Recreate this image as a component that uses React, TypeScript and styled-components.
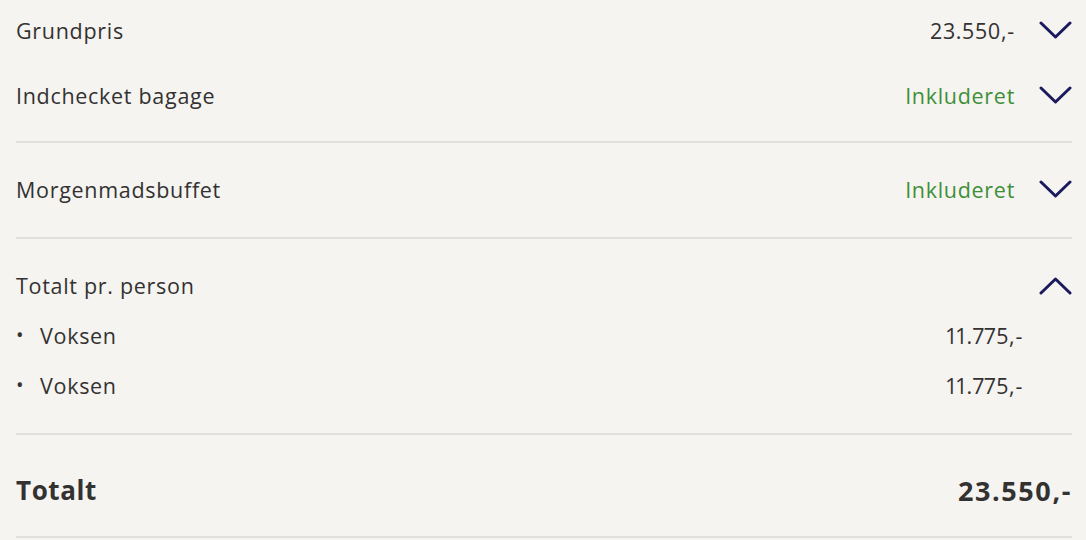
import styled, { createGlobalStyle } from "styled-components";

const GlobalStyle = createGlobalStyle`
  html, body {
    margin: 0;
    padding: 0;
    background: #f5f4f1;
  }
  body {
    font-family: "Open Sans", Lato, sans-serif;
    color: #333231;
  }
`;

const Wrapper = styled.div`
  width: 1086px;
  height: 540px;
  padding: 0 14px 0 16px;
  box-sizing: border-box;
  background: #f5f4f1;
  overflow: hidden;
`;

const Section = styled.section<{ $top: number; $bottom: number; $gap?: number }>`
  display: flex;
  flex-direction: column;
  gap: ${(p) => p.$gap ?? 10}px;
  padding-top: ${(p) => p.$top}px;
  padding-bottom: ${(p) => p.$bottom}px;
  border-bottom: 2px solid #e0dfdb;
`;

const Row = styled.div`
  display: flex;
  align-items: center;
  height: 40px;
`;

const SubRow = styled(Row)`
  padding-right: 49px;
`;

const Label = styled.span`
  flex: 1;
  font-size: 21.5px;
  letter-spacing: 0.7px;
`;

const Bullet = styled.span`
  width: 24px;
  font-size: 20px;
  line-height: 1;
`;

const Value = styled.span<{ $included?: boolean }>`
  font-size: 21.5px;
  letter-spacing: 0.7px;
  font-feature-settings: "pnum";
  color: ${(p) => (p.$included ? "#3f8f38" : "#333231")};
`;

const Toggle = styled.button`
  display: flex;
  align-items: center;
  justify-content: center;
  width: 33px;
  height: 40px;
  margin-left: 24px;
  padding: 0;
  border: 0;
  background: none;
  color: #1c1a5e;
`;

const TotalLabel = styled.span`
  flex: 1;
  font-size: 26px;
  font-weight: 700;
  letter-spacing: 0.6px;
`;

const TotalValue = styled.span`
  font-size: 27px;
  font-weight: 700;
  letter-spacing: 1.6px;
`;

const Chevron = ({ up }: { up?: boolean }) => (
  <svg width="33" height="19" viewBox="0 0 33 19" fill="none">
    <path
      d={up ? "M2 17 L16.5 3 L31 17" : "M2 2 L16.5 16 L31 2"}
      stroke="currentColor"
      strokeWidth="3"
      strokeLinecap="round"
      strokeLinejoin="round"
    />
  </svg>
);

const lines = [
  { name: "Voksen", price: "11.775,-" },
  { name: "Voksen", price: "11.775,-" },
];

const App = () => (
  <>
    <GlobalStyle />
    <Wrapper>
      <Section $top={10} $bottom={26} $gap={25}>
        <Row>
          <Label>Grundpris</Label>
          <Value>23.550,-</Value>
          <Toggle>
            <Chevron />
          </Toggle>
        </Row>
        <Row>
          <Label>Indchecket bagage</Label>
          <Value $included>Inkluderet</Value>
          <Toggle>
            <Chevron />
          </Toggle>
        </Row>
      </Section>
      <Section $top={26} $bottom={28}>
        <Row>
          <Label>Morgenmadsbuffet</Label>
          <Value $included>Inkluderet</Value>
          <Toggle>
            <Chevron />
          </Toggle>
        </Row>
      </Section>
      <Section $top={26} $bottom={28}>
        <Row>
          <Label>Totalt pr. person</Label>
          <Toggle>
            <Chevron up />
          </Toggle>
        </Row>
        {lines.map((line, i) => (
          <SubRow key={i}>
            <Bullet>•</Bullet>
            <Label>{line.name}</Label>
            <Value>{line.price}</Value>
          </SubRow>
        ))}
      </Section>
      <Section $top={35} $bottom={26}>
        <Row>
          <TotalLabel>Totalt</TotalLabel>
          <TotalValue>23.550,-</TotalValue>
        </Row>
      </Section>
    </Wrapper>
  </>
);

export default App;
